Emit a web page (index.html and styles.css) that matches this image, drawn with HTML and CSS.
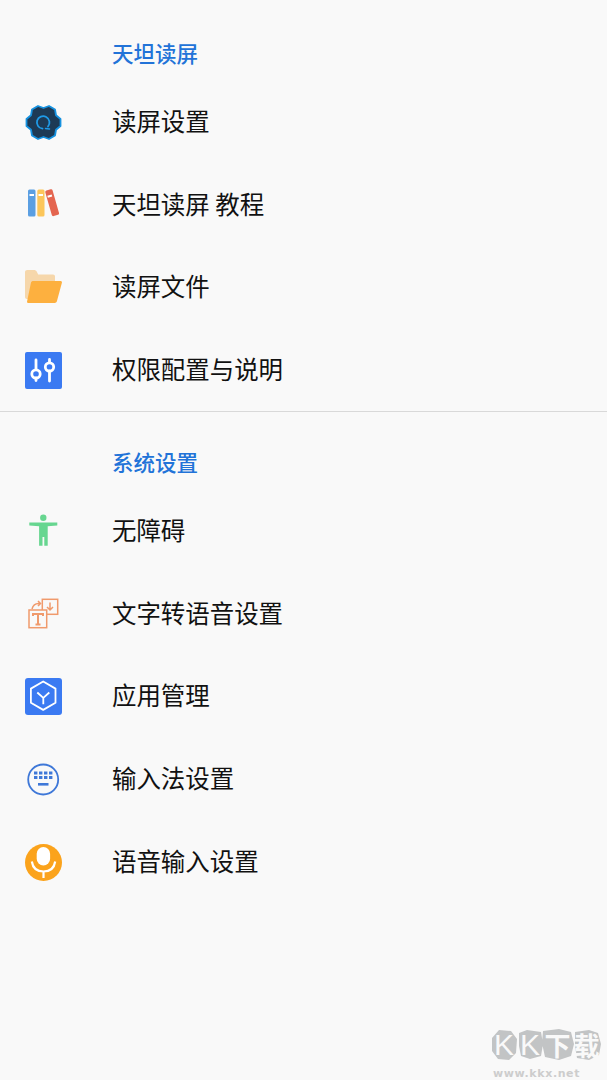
FILE: index.html

```html
<!DOCTYPE html>
<html lang="zh-CN">
<head>
    <meta charset="UTF-8">
    <title>天坦读屏</title>
    <link rel="stylesheet" href="styles.css">
</head>
<body>
    <section class="group first">
        <h2 class="group-title">天坦读屏</h2>
        <div class="row">
            <svg class="icon" viewBox="0 0 37 37">
                <path d="M35.500 15L35.500 22L31 25.750L30 31.500L24 35L18.500 33L13 35L7 31.500L6 25.750L1.500 22L1.500 15L6 11.250L7 5.500L13 2L18.500 4L24 2L30 5.500L31 11.250z" fill="#1d3a55" stroke="#1692e0" stroke-width="1.800" stroke-linejoin="round"/>
                <path d="M23 22.500a6.300 6.300 0 1 0-5.500 2.200" fill="none" stroke="#1f9be8" stroke-width="1.800" stroke-linecap="round"/>
                <path d="M20.500 24.500l4 .5" fill="none" stroke="#1f9be8" stroke-width="1.500" stroke-linecap="round"/>
            </svg>
            <span class="label">读屏设置</span>
        </div>
        <div class="row">
            <svg class="icon" viewBox="0 0 37 37">
                <rect x="3" y="2.500" width="7.500" height="27" rx="1.500" fill="#5b9fe2"/>
                <rect x="12.300" y="2.500" width="7.200" height="27" rx="1.500" fill="#fcc65a"/>
                <rect x="23.500" y="2.500" width="7.500" height="26.500" rx="1.500" fill="#e4654f" transform="rotate(-16 27 16)"/>
                <rect x="4.500" y="7" width="4.500" height="2" fill="#fff"/>
                <rect x="13.500" y="7" width="4.500" height="2" fill="#fff"/>
                <rect x="22.500" y="8" width="4.500" height="2" fill="#fff" transform="rotate(-16 25 9)"/>
            </svg>
            <span class="label">天坦读屏 教程</span>
        </div>
        <div class="row">
            <svg class="icon" viewBox="0 0 37 37">
                <path d="M0 3C0 1.800 1 1 2.200 1H9c1.200 0 2 .5 2.700 1.500l1.500 3H28c1.200 0 2 .8 2 2V12H9L3 30H2c-1.200 0-2-.8-2-2z" fill="#f6d7ab"/>
                <path d="M6 13.500C6.400 12.500 7.200 12 8.200 12H35.500c1 0 1.700.8 1.400 1.800l-5 18.500c-.3 1-1.200 1.700-2.200 1.700H3.500c-1 0-1.700-.9-1.400-1.800z" fill="#fdb03f"/>
            </svg>
            <span class="label">读屏文件</span>
        </div>
        <div class="row">
            <svg class="icon" viewBox="0 0 37 37">
                <rect width="37" height="37" rx="2" fill="#3b7af2"/>
                <path d="M11 8v9M11 26v2.500M24.500 7.500v3M24.500 19v10" stroke="#fff" stroke-width="2.800" stroke-linecap="round"/>
                <circle cx="11" cy="22" r="4.200" fill="none" stroke="#fff" stroke-width="2.800"/>
                <circle cx="24.500" cy="15" r="4.200" fill="none" stroke="#fff" stroke-width="2.800"/>
            </svg>
            <span class="label">权限配置与说明</span>
        </div>
    </section>
    <section class="group">
        <h2 class="group-title">系统设置</h2>
        <div class="row">
            <svg class="icon" viewBox="0 0 37 37">
                <circle cx="18.300" cy="4.700" r="3.200" fill="#67d690"/>
                <path d="M4.300 9.500h28v3l-9.600.8v19.400h-3.400V24h-1.800v8.700h-3.400V13.300l-9.800-.8z" fill="#67d690"/>
            </svg>
            <span class="label">无障碍</span>
        </div>
        <div class="row">
            <svg class="icon" viewBox="0 0 37 37">
                <g fill="none" stroke="#f09a6c" stroke-width="1.500">
                    <rect x="17.300" y="3.300" width="15.400" height="15"/>
                    <rect x="4" y="14" width="17.700" height="17.700" fill="#f9f9f9"/>
                    <path d="M25 6.500v7M22 11l3 3l3-3"/>
                    <path d="M7 13c1-4 4-6 8-5.500M13 5l2.500 2.500L13 10"/>
                    <path d="M8 20v-2h10v2M13 18v10.500M10.500 28.500h5" stroke-width="2"/>
                </g>
            </svg>
            <span class="label">文字转语音设置</span>
        </div>
        <div class="row">
            <svg class="icon" viewBox="0 0 37 37">
                <rect width="37" height="37" rx="3" fill="#3b7af2"/>
                <g fill="none" stroke="#fff" stroke-width="1.800" stroke-linejoin="round">
                    <path d="M18.200 3.500l12.300 7.100v14.200l-12.300 7.100L5.900 24.800V10.600z"/>
                    <path d="M12.300 14.500l6 5.300l6-5.300M18.300 19.800v6.500"/>
                </g>
            </svg>
            <span class="label">应用管理</span>
        </div>
        <div class="row">
            <svg class="icon" viewBox="0 0 37 37">
                <circle cx="18.200" cy="18.500" r="15" fill="none" stroke="#3f78d8" stroke-width="1.800"/>
                <g fill="#3f78d8">
                    <rect x="9" y="10.500" width="3.400" height="3"/><rect x="14" y="10.500" width="3.400" height="3"/><rect x="19" y="10.500" width="3.400" height="3"/><rect x="24" y="10.500" width="3.400" height="3"/>
                    <rect x="9" y="15" width="3.400" height="3"/><rect x="14" y="15" width="3.400" height="3"/><rect x="19" y="15" width="3.400" height="3"/><rect x="24" y="15" width="3.400" height="3"/>
                    <rect x="13" y="22" width="10.500" height="2.600"/>
                </g>
            </svg>
            <span class="label">输入法设置</span>
        </div>
        <div class="row">
            <svg class="icon" viewBox="0 0 37 37">
                <circle cx="18.500" cy="18.500" r="18.500" fill="#fba31c"/>
                <rect x="11.700" y="3" width="13.400" height="18.500" rx="6.700" fill="#fff"/>
                <path d="M6.800 17.500c1 6.500 5.500 10 11.700 10s10.700-3.500 11.700-10M18.500 27v7" fill="none" stroke="#fff" stroke-width="2.200"/>
            </svg>
            <span class="label">语音输入设置</span>
        </div>
    </section>

    <div class="watermark">
        <svg class="stones" viewBox="0 0 110 33">
            <path d="M1 10l7-8l12 1l6 8l-1 14l-7 7l-11-1l-6-8zM28 5l8-3l14 2l2 12l-2 12l-11 3l-9-3l-2-10zM52 3l16-2l12 3l3 12l-3 12l-12 4l-14-3l-3-14zM84 4l14-2l9 3l3 11l-2 11l-10 5l-12-2l-2-12z" fill="#c2c4c5"/>
        </svg>
        <div class="wm-logo"><span class="wm-k">K</span><span class="wm-k">K</span><span class="wm-cn">下</span><span class="wm-cn">载</span></div>
        <div class="wm-url">www.kkx.net</div>
    </div>
</body>
</html>
```

FILE: styles.css

```css
html, body {
    height: 100%;
}

body {
    margin: 0;
    height: 1080px;
    overflow: hidden;
    position: relative;
    background-color: #f9f9f9;
    color: #111;
    font-family: "Noto Sans CJK SC", "Noto Sans", sans-serif;
}

.group.first {
    border-bottom: 1px solid #d9d9d9;
    height: 411px;
}

.group-title {
    margin: 0;
    height: 78px;
    padding-left: 112px;
    display: flex;
    align-items: center;
    font-size: 21.500px;
    font-weight: 500;
    color: #2273d8;
    box-sizing: border-box;
    padding-top: 20px;
}

.group.first .group-title {
    height: 81px;
    padding-top: 23px;
}

.row {
    height: 82.700px;
    display: flex;
    align-items: center;
}

.icon {
    width: 37px;
    height: 37px;
    margin-left: 25px;
    margin-right: 50px;
    flex-shrink: 0;
}

.label {
    font-size: 24.450px;
    white-space: nowrap;
    padding-bottom: 4px;
}

.watermark {
    position: absolute;
    left: 491px;
    top: 1028px;
    width: 116px;
    height: 52px;
}

.stones {
    position: absolute;
    left: 0;
    top: 0;
    width: 110px;
    height: 33px;
}

.wm-logo {
    position: absolute;
    left: 0;
    top: 0;
    width: 110px;
    height: 33px;
    display: flex;
    align-items: center;
    color: #f9f9f9;
    line-height: 33px;
}

.wm-k {
    width: 26px;
    text-align: center;
    font-family: "Liberation Sans", sans-serif;
    font-size: 30px;
}

.wm-cn {
    width: 29px;
    text-align: center;
    font-family: "Noto Sans CJK SC", sans-serif;
    font-size: 26px;
    font-weight: 700;
}

.wm-url {
    position: absolute;
    left: 2px;
    top: 39px;
    font-family: "DejaVu Sans", sans-serif;
    font-weight: 700;
    font-size: 11px;
    letter-spacing: 0.600px;
    line-height: 13px;
    color: #cdcdcd;
}
```
